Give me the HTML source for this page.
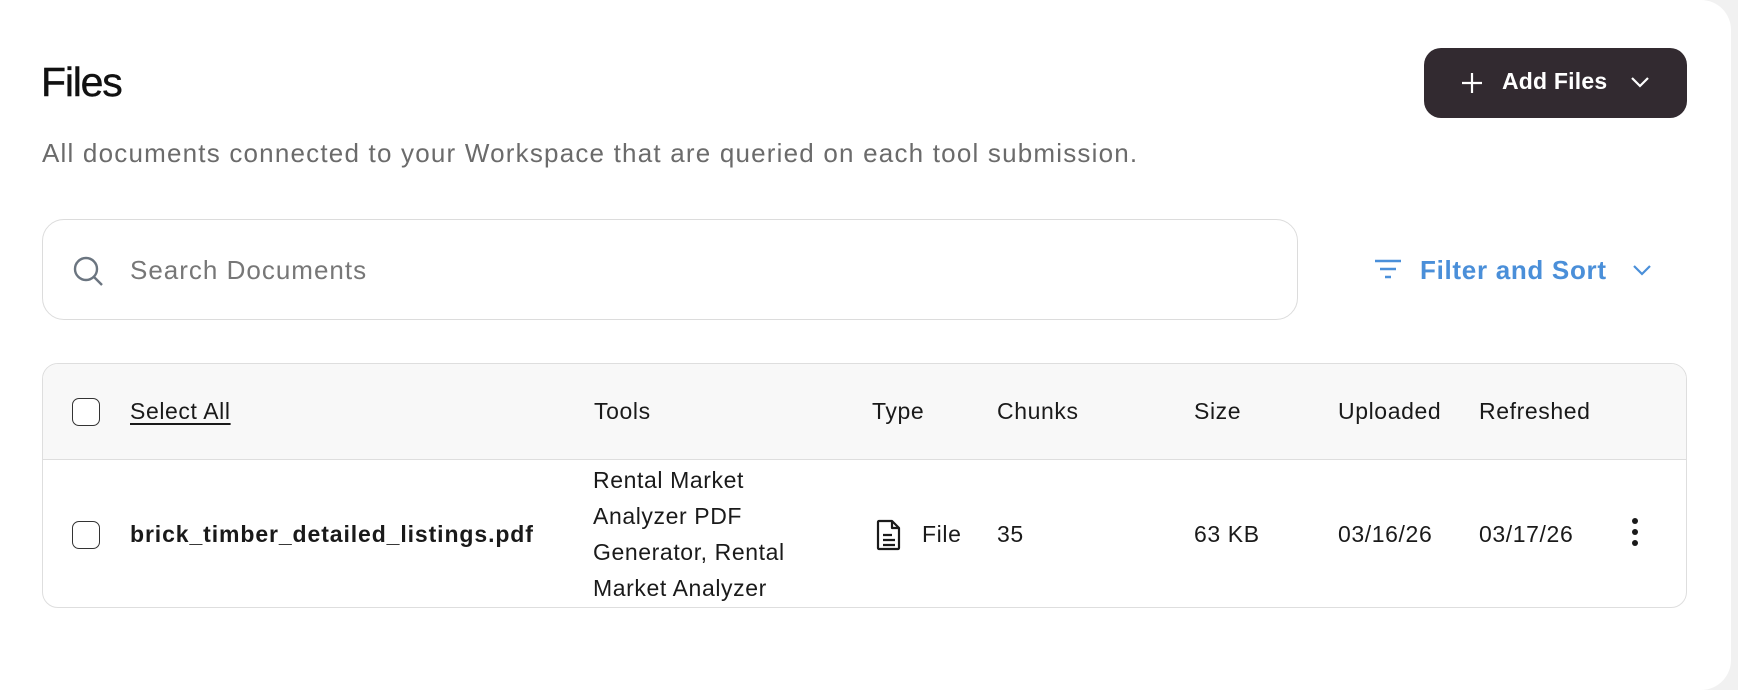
<!DOCTYPE html>
<html><head><meta charset="utf-8"><style>
*{box-sizing:border-box;margin:0;padding:0}
body{width:1738px;height:654px;background:#f1f1f1;font-family:"Liberation Sans",sans-serif;color:#1a1a1a;position:relative;overflow:hidden}
.card{position:absolute;left:0;top:0;width:1731px;height:690px;background:#fff;border-radius:0 30px 30px 0}
.abs{position:absolute;white-space:nowrap}
h1{position:absolute;left:41px;top:59px;font-size:41px;font-weight:normal;letter-spacing:-1.2px;color:#111;-webkit-text-stroke:0.4px #111}
.sub{left:42px;top:138px;font-size:26px;color:#6b6b6b;letter-spacing:1.2px}
.btn{position:absolute;left:1424px;top:48px;width:263px;height:70px;background:#322a30;border-radius:17px;color:#fff}
.search{position:absolute;left:42px;top:219px;width:1256px;height:101px;border:1.5px solid #dcdcdc;border-radius:22px}
.table{position:absolute;left:42px;top:363px;width:1645px;height:245px;border:1.5px solid #dedede;border-radius:16px;overflow:hidden}
.head{position:absolute;left:0;top:0;width:100%;height:96px;background:#f8f8f8;border-bottom:1.5px solid #dedede}
.cb{position:absolute;width:28px;height:28px;border:1.5px solid #333;border-radius:7px;background:#fff}
.t{position:absolute;font-size:23px;letter-spacing:0.6px;white-space:nowrap;color:#1a1a1a}
</style></head><body>
<div class="card">
<h1>Files</h1>
<div class="abs sub">All documents connected to your Workspace that are queried on each tool submission.</div>
<div class="btn">
<svg style="position:absolute;left:37px;top:24px" width="22" height="22" viewBox="0 0 22 22"><path d="M11 1v20M1 11h20" stroke="#fff" stroke-width="2.2"/></svg>
<div class="abs" style="left:78px;top:20px;font-size:23px;font-weight:bold;letter-spacing:0.2px">Add Files</div>
<svg style="position:absolute;left:206px;top:28px" width="20" height="12" viewBox="0 0 20 12"><path d="M2 2l8 8 8-8" stroke="#fff" stroke-width="2.2" fill="none"/></svg>
</div>
<div class="search">
<svg style="position:absolute;left:30px;top:36px" width="32" height="32" viewBox="0 0 32 32"><circle cx="13" cy="13" r="11" stroke="#6b7580" stroke-width="2.4" fill="none"/><path d="M21 21l8 8" stroke="#6b7580" stroke-width="2.4"/></svg>
<div class="abs" style="left:87px;top:35px;font-size:26px;letter-spacing:1px;color:#777">Search Documents</div>
</div>
<svg style="position:absolute;left:1374px;top:259px" width="28" height="22" viewBox="0 0 28 22"><path d="M1 2h26M6 10h16M11 18h6" stroke="#4a8fd9" stroke-width="2.6"/></svg>
<div class="abs" style="left:1420px;top:255px;font-size:26px;font-weight:bold;color:#4a8fd9;letter-spacing:0.7px">Filter and Sort</div>
<svg style="position:absolute;left:1632px;top:264px" width="20" height="12" viewBox="0 0 20 12"><path d="M2 2l8 8 8-8" stroke="#4a8fd9" stroke-width="2.2" fill="none"/></svg>
<div class="table">
<div class="head"></div>
<div class="cb" style="left:29px;top:34px"></div>
<div class="t" style="left:87px;top:34px;text-decoration:underline;text-underline-offset:4px">Select All</div>
<div class="t" style="left:551px;top:34px">Tools</div>
<div class="t" style="left:829px;top:34px">Type</div>
<div class="t" style="left:954px;top:34px">Chunks</div>
<div class="t" style="left:1151px;top:34px">Size</div>
<div class="t" style="left:1295px;top:34px">Uploaded</div>
<div class="t" style="left:1436px;top:34px">Refreshed</div>
<div class="cb" style="left:29px;top:157px"></div>
<div class="t" style="left:87px;top:157px;font-weight:bold;letter-spacing:0.9px">brick_timber_detailed_listings.pdf</div>
<div class="t" style="left:550px;top:98px;line-height:36px;white-space:normal;width:220px">Rental Market<br>Analyzer PDF<br>Generator, Rental<br>Market Analyzer</div>
<svg style="position:absolute;left:833px;top:155px" width="26" height="32" viewBox="0 0 26 32"><path d="M3 2h13l7 7v20a1 1 0 0 1-1 1H3a1 1 0 0 1-1-1V3a1 1 0 0 1 1-1zM16 2v7h7M7 16h9M7 21h12M7 26h12" stroke="#1a1a1a" stroke-width="2.2" fill="none" stroke-linejoin="round"/></svg>
<div class="t" style="left:879px;top:157px">File</div>
<div class="t" style="left:954px;top:157px">35</div>
<div class="t" style="left:1151px;top:157px">63 KB</div>
<div class="t" style="left:1295px;top:157px">03/16/26</div>
<div class="t" style="left:1436px;top:157px">03/17/26</div>
<svg style="position:absolute;left:1588px;top:152px" width="8" height="32" viewBox="0 0 8 32"><circle cx="4" cy="5" r="3" fill="#1a1a1a"/><circle cx="4" cy="16" r="3" fill="#1a1a1a"/><circle cx="4" cy="27" r="3" fill="#1a1a1a"/></svg>
</div>
</div>
</body></html>
